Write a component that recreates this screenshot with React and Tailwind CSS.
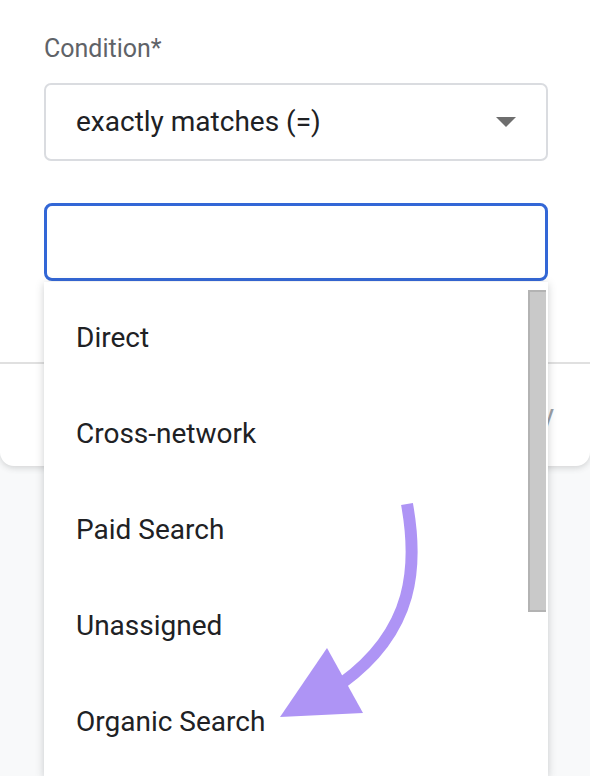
import React from "react";

const items = ["Direct", "Cross-network", "Paid Search", "Unassigned", "Organic Search"];

export default function App() {
  return (
    <div className="relative w-[590px] h-[776px] overflow-hidden bg-[#f8f9fa] font-['Roboto',sans-serif]">
      {/* dialog card */}
      <div className="h-[466px] rounded-b-[14px] bg-white shadow-[0_2px_6px_rgba(60,64,67,0.2)] flex flex-col">
        <div className="pl-[44px] pr-[42px] pt-[34px]">
          <div className="text-[25px] leading-[30px] text-[#5f6368]">Condition*</div>
          <div className="mt-[19px] h-[78px] rounded-[7px] border-2 border-[#dadce0] flex items-center justify-between pl-[30px] pr-[30px]">
            <span className="text-[28px] text-[#202124]">exactly matches (=)</span>
            <svg width="20" height="10" viewBox="0 0 20 10"><path d="M0 0 L20 0 L10 10 Z" fill="#6e6e6e" /></svg>
          </div>
          <div className="mt-[42px] h-[78px] rounded-[8px] border-[3px] border-[#3367d6]"></div>
        </div>
        <div className="mt-[81px] border-t-2 border-[#e0e0e0]"></div>
        <div className="flex-1 flex items-center justify-end pr-[36px]">
          <span className="text-[28px] text-[#9aa0a6]">Apply</span>
        </div>
      </div>

      {/* dropdown menu overlay */}
      <div className="absolute left-[44px] top-[282px] w-[504px] bottom-0 bg-white shadow-[0_2px_8px_rgba(60,64,67,0.25)] pt-[8px]">
        {items.map((t) => (
          <div key={t} className="h-[96px] flex items-center pl-[32px] text-[28px] text-[#202124]">{t}</div>
        ))}
        <div className="absolute left-[484px] top-[8px] w-[18px] h-[322px] bg-[#c9c9c9] border-l-2 border-t-2 border-b-2 border-[#b3b3b3]"></div>
      </div>

      {/* purple arrow annotation */}
      <svg className="absolute left-0 top-0 pointer-events-none" width="590" height="776" viewBox="0 0 590 776">
        <path d="M407 504 C418 565 415 630 342 683" fill="none" stroke="#ae94f5" strokeWidth="12" />
        <path d="M327 648 L280 717 L363 713 Z" fill="#ae94f5" />
      </svg>
    </div>
  );
}
